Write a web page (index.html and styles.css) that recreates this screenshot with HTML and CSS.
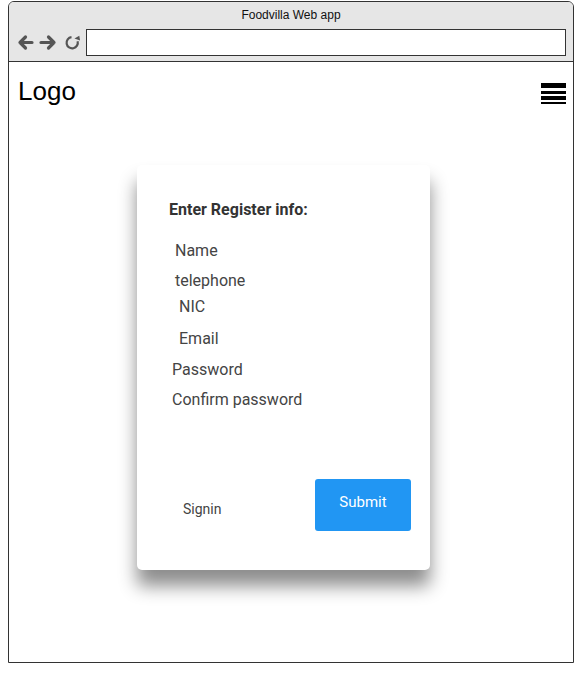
FILE: index.html
```html
<!DOCTYPE html>
<html>
<head>
<meta charset="utf-8">
<title>Foodvilla Web app</title>
<link rel="stylesheet" href="styles.css">
</head>
<body>
<div class="frame">
  <div class="chrome">
    <div class="chrome-title">Foodvilla Web app</div>
    <div class="toolbar">
      <svg class="nav-icons" width="64" height="27" viewBox="0 0 64 27">
        <g fill="none" stroke="#555" stroke-width="3.2" stroke-linecap="round" stroke-linejoin="round">
          <path d="M15 13.5 H3 M8.5 8 L3 13.5 L8.5 19"/>
          <path d="M24 13.5 H37 M31.5 8 L37 13.5 L31.5 19"/>
        </g>
        <path d="M54.5 8.2 A5.6 5.6 0 1 0 60.6 12.3" fill="none" stroke="#555" stroke-width="2.2"/>
        <path d="M57.6 10.6 L63.6 10.6 L61.2 6.4 Z" fill="#555" transform="rotate(20 60.6 9.6)"/>
      </svg>
      <div class="address"></div>
    </div>
  </div>
  <div class="page">
    <div class="header">
      <div class="logo">Logo</div>
      <svg class="menu" width="25" height="21" viewBox="0 0 25 21">
        <rect x="0" y="0" width="25" height="5" fill="#000"/>
        <rect x="0" y="8" width="25" height="3" fill="#000"/>
        <rect x="0" y="13" width="25" height="4" fill="#000"/>
        <rect x="0" y="19" width="25" height="2" fill="#000"/>
      </svg>
    </div>
    <div class="card">
      <div class="card-title">Enter Register info:</div>
      <div class="field f-name">Name</div>
      <div class="field f-tel">telephone</div>
      <div class="field f-nic">NIC</div>
      <div class="field f-email">Email</div>
      <div class="field f-pass">Password</div>
      <div class="field f-confirm">Confirm password</div>
      <div class="card-footer">
        <div class="signin">Signin</div>
        <div class="submit">Submit</div>
      </div>
    </div>
  </div>
</div>
</body>
</html>
```
FILE: styles.css
```css
html, body {
  margin: 0;
  padding: 0;
  background: #fff;
}
body {
  font-family: Roboto, "Liberation Sans", Arial, sans-serif;
}
.frame {
  margin: 1px 0 0 8px;
  width: 564px;
  height: 660px;
  border: 1px solid #333;
  border-radius: 6px 6px 0 0;
  overflow: hidden;
  display: flex;
  flex-direction: column;
}
.chrome {
  background: #e6e6e6;
  border-bottom: 1px solid #333;
  padding-top: 6px;
  height: 53px;
}
.chrome-title {
  font-family: "Liberation Sans", Arial, sans-serif;
  font-size: 12px;
  line-height: 14px;
  text-align: center;
  color: #111;
}
.toolbar {
  display: flex;
  align-items: center;
  margin-top: 7px;
  padding: 0 7px 0 8px;
}
.nav-icons {
  flex: none;
  margin-right: 5px;
}
.address {
  flex: 1;
  height: 25px;
  background: #fff;
  border: 1px solid #333;
}
.page {
  flex: 1;
  background: #fff;
}
.header {
  display: flex;
  justify-content: space-between;
  align-items: flex-start;
  padding: 14px 7px 0 9px;
}
.logo {
  font-family: "Liberation Sans", Arial, sans-serif;
  font-size: 26px;
  line-height: 30px;
  color: #000;
}
.menu {
  margin-top: 7px;
}
.card {
  margin: 59px 0 0 128px;
  width: 293px;
  height: 405px;
  box-sizing: border-box;
  background: #fff;
  border-radius: 5px;
  box-shadow: 0 16px 18px rgba(0, 0, 0, 0.45);
  padding: 36px 19px 0 32px;
  display: flex;
  flex-direction: column;
}
.card-title {
  font-size: 16px;
  font-weight: bold;
  line-height: 18px;
  color: #333;
}
.field {
  font-size: 16px;
  line-height: 20px;
  color: #444;
}
.f-name { margin: 22px 0 0 6px; }
.f-tel { margin: 10px 0 0 6px; }
.f-nic { margin: 6px 0 0 10px; }
.f-email { margin: 12px 0 0 10px; }
.f-pass { margin: 11px 0 0 3px; }
.f-confirm { margin: 10px 0 0 3px; }
.card-footer {
  margin-top: 69px;
  display: flex;
  justify-content: space-between;
  align-items: flex-start;
}
.signin {
  margin: 22px 0 0 14px;
  font-size: 14px;
  line-height: 17px;
  color: #444;
}
.submit {
  width: 96px;
  height: 52px;
  box-sizing: border-box;
  padding-top: 14px;
  background: #2196f3;
  border-radius: 3px;
  color: #fff;
  font-size: 15px;
  line-height: 18px;
  text-align: center;
}
```
